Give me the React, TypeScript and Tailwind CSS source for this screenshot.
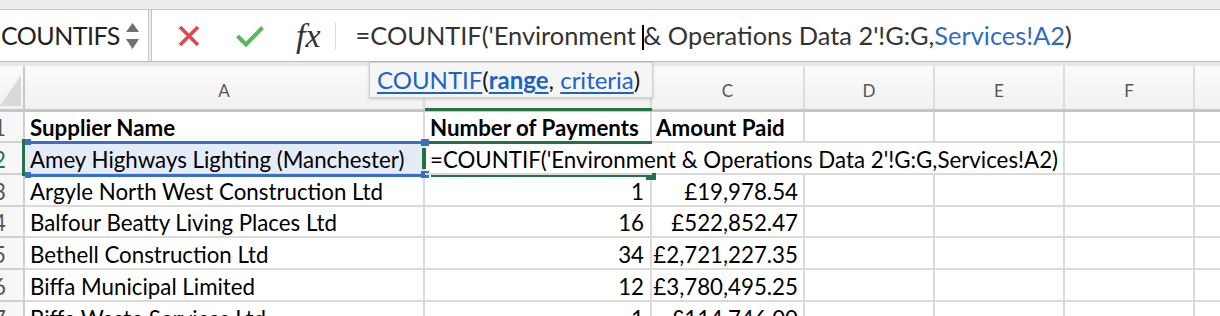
import React from 'react';

type Row = {
    n: number;
    h: string;
    a: string;
    b?: string;
    c?: string;
    bold?: boolean;
};

const rows: Row[] = [
    { n: 1, h: 'h-[31px]', a: 'Supplier Name', b: 'Number of Payments', c: 'Amount Paid', bold: true },
    { n: 2, h: 'h-[32px]', a: 'Amey Highways Lighting (Manchester)' },
    { n: 3, h: 'h-[32px]', a: 'Argyle North West Construction Ltd', b: '1', c: '£19,978.54' },
    { n: 4, h: 'h-[31px]', a: 'Balfour Beatty Living Places Ltd', b: '16', c: '£522,852.47' },
    { n: 5, h: 'h-[32px]', a: 'Bethell Construction Ltd', b: '34', c: '£2,721,227.35' },
    { n: 6, h: 'h-[32px]', a: 'Biffa Municipal Limited', b: '12', c: '£3,780,495.25' },
    { n: 7, h: 'h-[32px]', a: 'Biffa Waste Services Ltd', b: '1', c: '£114,746.00' },
];

const columns = [
    { key: 'A', w: 'w-[400px]' },
    { key: 'B', w: 'w-[227px]' },
    { key: 'C', w: 'w-[153px]' },
    { key: 'D', w: 'w-[130px]' },
    { key: 'E', w: 'w-[130px]' },
    { key: 'F', w: 'w-[130px]' },
    { key: '', w: 'w-[60px]' },
];

const cellBase = 'shrink-0 flex items-end pb-0 border-b-2 border-[#dadada] leading-[26px]';

const FormulaText: React.FC = () => (
    <span>
        =COUNTIF('Environment{' '}
        <span className="inline-block w-[2px] h-[25px] bg-black -mr-[1px] align-[-5px]" />
        &amp; Operations Data 2'!G:G,<span className="text-[#2e6cc4]">Services!A2</span>)
    </span>
);

const App: React.FC = () => {
    return (
        <div className="relative w-[1220px] h-[316px] overflow-hidden bg-white font-['Lato',sans-serif] text-black">
            {/* toolbar strip */}
            <div className="h-[10px] bg-[#ececec] border-b border-[#c8c8c8]" />

            {/* formula bar */}
            <div className="flex h-[52px] bg-white border-b border-[#bcbcbc]">
                <div className="flex w-[148px] items-center pl-[1px]">
                    <span className="text-[25px] text-[#222] tracking-[-0.5px]">COUNTIFS</span>
                    <svg className="ml-auto mr-[8px]" width="15" height="28" viewBox="0 0 15 28">
                        <path d="M7.5 1 L14 10 L1 10 Z" fill="#6f6f6f" />
                        <path d="M7.5 27 L14 17 L1 17 Z" fill="#6f6f6f" />
                    </svg>
                </div>
                <div className="w-[4px] border-x border-[#c4c4c4] bg-[#efefef]" />
                <div className="flex flex-1 items-center">
                    <svg className="ml-[26px]" width="22" height="22" viewBox="0 0 22 22">
                        <path d="M2 2 L20 20 M20 2 L2 20" stroke="#e0484d" strokeWidth="3.6" strokeLinecap="butt" />
                    </svg>
                    <svg className="ml-[36px]" width="28" height="22" viewBox="0 0 28 22">
                        <path d="M1.5 11 L10 19.5 L26.5 2.5" stroke="#5bb85a" strokeWidth="4" fill="none" />
                    </svg>
                    <span className="ml-[32px] font-['Liberation_Serif',serif] italic text-[34px] leading-none text-[#333]">
                        fx
                    </span>
                    <div className="ml-[14px] w-px h-[28px] bg-[#dcdcdc]" />
                    <div className="ml-[20px] whitespace-nowrap text-[25.4px] text-[#333]">
                        <FormulaText />
                    </div>
                </div>
            </div>

            <div className="h-[4px] bg-[#e7e7e7]" />

            {/* column headers */}
            <div className="flex h-[46px] bg-linear-to-b from-[#fbfbfb] to-[#f1f1f1] border-b-[3px] border-[#c6c6c6]">
                <div className="relative w-[25px] shrink-0 border-r-2 border-[#c8c8c8]">
                    <svg className="absolute left-0 top-[9px]" width="21" height="31" viewBox="0 0 21 31">
                        <path d="M21 0 L21 31 L0 31 Z" fill="#d9d9d9" />
                    </svg>
                </div>
                {columns.map((col) => (
                    <div
                        key={col.w + col.key}
                        className={`${col.w} shrink-0 flex items-center justify-center pt-[6px] border-r-2 border-[#dcdcdc] text-[17px] text-[#555]`}
                    >
                        {col.key}
                    </div>
                ))}
            </div>

            {/* grid */}
            {rows.map((row) => {
                const active = row.n === 2;
                return (
                    <div key={row.n} className={`flex ${row.h} text-[22.3px]`}>
                        <div
                            className={`w-[25px] shrink-0 flex items-end justify-end pr-[17px] border-r-2 border-b-2 border-[#d0d0d0] bg-[#f7f7f7] leading-[26px] overflow-hidden ${
                                active ? 'text-[#217346]' : 'text-[#555]'
                            }`}
                        >
                            {row.n}
                        </div>
                        <div
                            className={`${cellBase} w-[400px] border-r-2 pl-[5px] whitespace-nowrap ${
                                row.bold ? 'font-bold' : ''
                            } ${active ? 'bg-[#e4ecf8]' : ''}`}
                        >
                            {row.a}
                        </div>
                        {active ? (
                            <>
                                <div className={`${cellBase} w-[227px] pl-[5px] whitespace-nowrap overflow-visible relative z-10`}>
                                    =COUNTIF('Environment &amp; Operations Data 2'!G:G,Services!A2)
                                </div>
                                <div className={`${cellBase} w-[153px]`} />
                                <div className={`${cellBase} w-[130px]`} />
                            </>
                        ) : (
                            <>
                                <div
                                    className={`${cellBase} w-[227px] border-r-2 whitespace-nowrap ${
                                        row.bold ? 'font-bold pl-[5px]' : 'justify-end pr-[6px]'
                                    }`}
                                >
                                    {row.b}
                                </div>
                                <div
                                    className={`${cellBase} w-[153px] border-r-2 whitespace-nowrap ${
                                        row.bold ? 'font-bold pl-[4px]' : 'justify-end pr-[5px]'
                                    }`}
                                >
                                    {row.c}
                                </div>
                                <div className={`${cellBase} w-[130px] border-r-2`} />
                            </>
                        )}
                        <div className={`${cellBase} w-[130px] border-r-2`} />
                        <div className={`${cellBase} w-[130px] border-r-2`} />
                        <div className={`${cellBase} w-[60px] border-r-2`} />
                    </div>
                );
            })}

            {/* active column marker */}
            <div className="absolute left-[425px] top-[108px] w-[227px] h-[3px] bg-[#217346]" />
            {/* active row marker */}
            <div className="absolute left-[22px] top-[139px] w-[3px] h-[37px] bg-[#217346]" />

            {/* active cell B2 */}
            <div className="absolute left-[425px] top-[141px] w-[227px] h-[3px] bg-[#217346]" />
            <div className="absolute left-[431px] top-[174px] w-[215px] h-[3px] bg-[#217346]" />
            <div className="absolute left-[422px] top-[148px] w-[4px] h-[21px] bg-[#217346]" />
            <div className="absolute left-[646px] top-[173px] w-[10px] h-[7px] bg-[#217346]" />

            {/* referenced range A2 */}
            <div className="absolute left-[27px] top-[141px] w-[395px] h-[3px] bg-[#3a6fc6]" />
            <div className="absolute left-[27px] top-[174px] w-[395px] h-[3px] bg-[#3a6fc6]" />
            <div className="absolute left-[25px] top-[139px] w-[6px] h-[6px] bg-[#3a6fc6]" />
            <div className="absolute left-[25px] top-[172px] w-[6px] h-[6px] bg-[#3a6fc6]" />
            <div className="absolute left-[421px] top-[139px] w-[8px] h-[7px] bg-[#3a6fc6]" />
            <div className="absolute left-[421px] top-[171px] w-[8px] h-[7px] bg-[#3a6fc6]" />

            {/* function tooltip */}
            <div className="absolute left-[369px] top-[62px] w-[284px] h-[36px] flex items-center pl-[7px] bg-[#f5f5f5] border border-[#cfcfcf] shadow-[0_1px_3px_rgba(0,0,0,0.2)] text-[24px] text-[#111] whitespace-pre">
                <span className="text-[#1c63c6] underline underline-offset-[3px]">COUNTIF</span>
                <span>(</span>
                <span className="text-[#1c63c6] font-bold underline underline-offset-[3px]">range</span>
                <span>, </span>
                <span className="text-[#1c63c6] underline underline-offset-[3px]">criteria</span>
                <span>)</span>
            </div>
        </div>
    );
};

export default App;
